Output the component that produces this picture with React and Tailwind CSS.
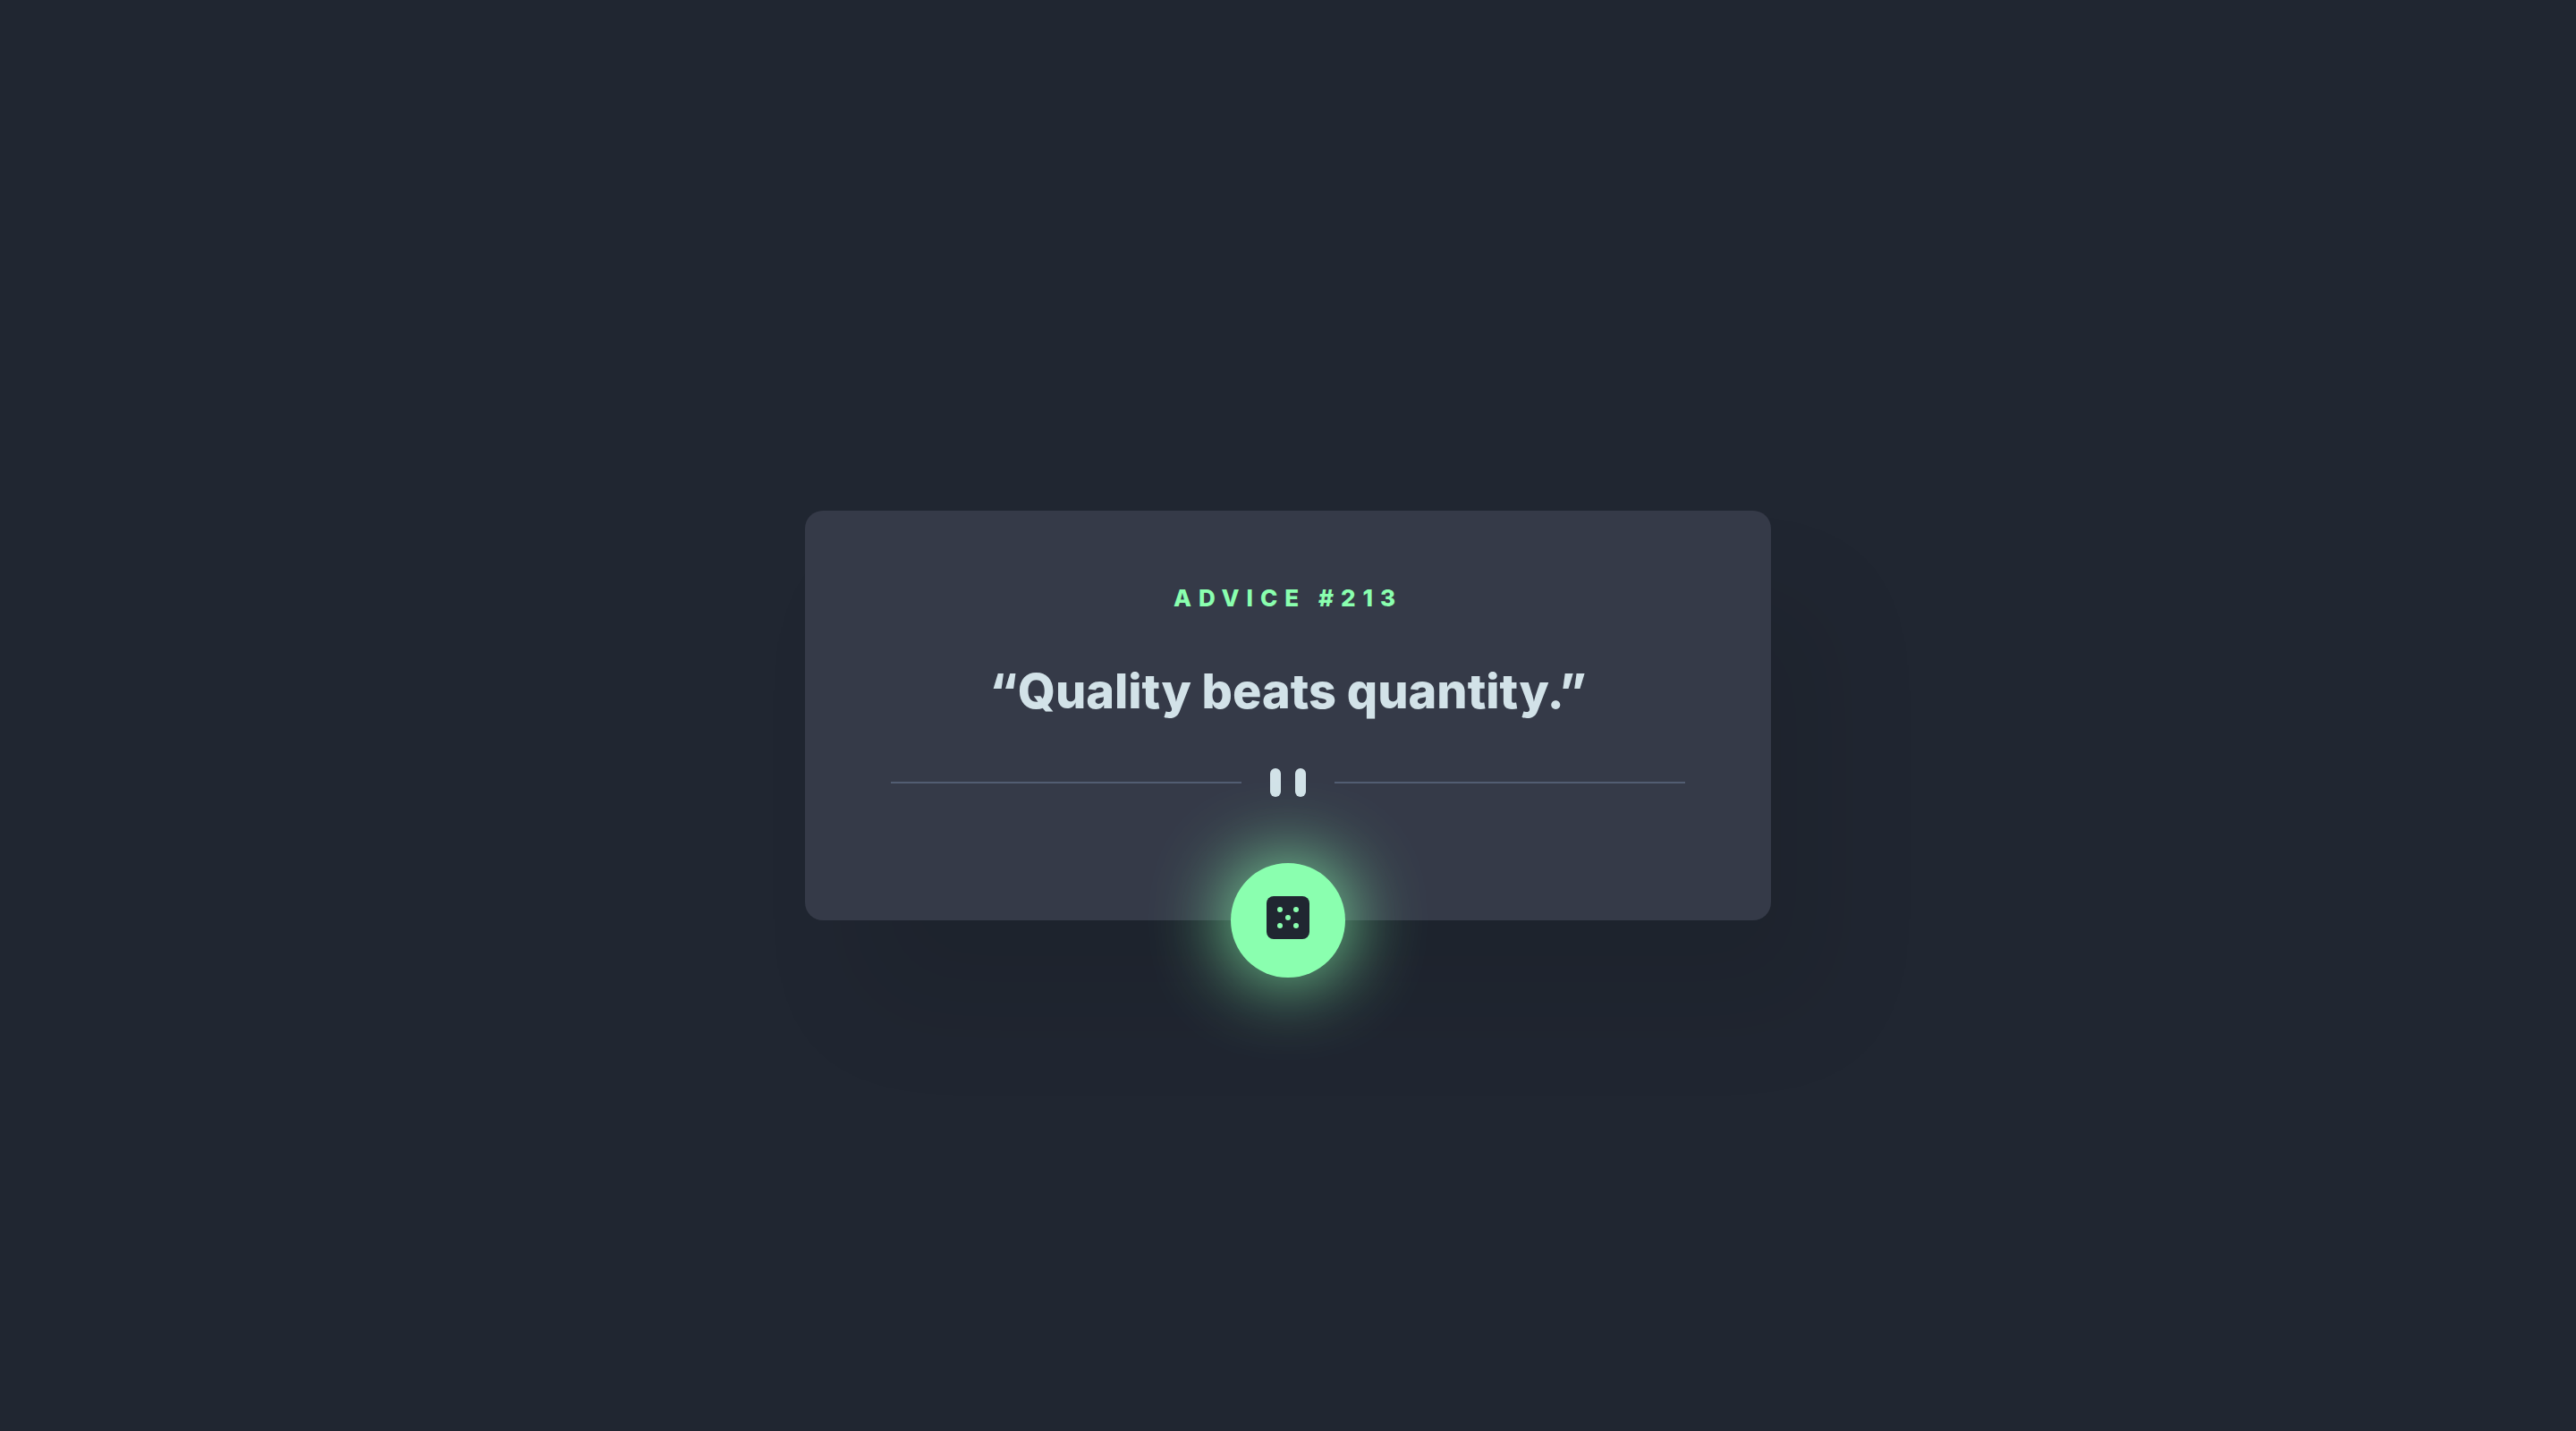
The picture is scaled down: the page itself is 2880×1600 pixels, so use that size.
function DiceIcon() {
  return (
    <svg viewBox="0 0 48 48" className="-mt-1.5 size-12" aria-hidden="true">
      <rect width="48" height="48" rx="8" fill="#202631" />
      <g fill="#8affaf">
        <circle cx="15" cy="15" r="3" />
        <circle cx="33" cy="15" r="3" />
        <circle cx="24" cy="24" r="3" />
        <circle cx="15" cy="33" r="3" />
        <circle cx="33" cy="33" r="3" />
      </g>
    </svg>
  );
}

function Divider() {
  return (
    <div className="mt-12 flex w-full items-center" aria-hidden="true">
      <span className="h-0.5 flex-1 bg-[#525d72]" />
      <span className="mx-8 flex gap-4">
        <span className="h-8 w-3 rounded-full bg-[#d2e2e8]" />
        <span className="h-8 w-3 rounded-full bg-[#d2e2e8]" />
      </span>
      <span className="h-0.5 flex-1 bg-[#525d72]" />
    </div>
  );
}

export default function App() {
  return (
    <main className="flex min-h-screen items-center justify-center bg-[#202631] font-['Inter',sans-serif]">
      <section className="flex w-full max-w-[1080px] flex-col items-center rounded-[20px] bg-[#353a48] px-24 pt-20 text-center shadow-[60px_100px_120px_rgba(0,0,0,0.08)]">
        <h1 className="text-[26px] leading-9 font-extrabold tracking-[8px] text-[#8affaf] uppercase">
          Advice #213
        </h1>
        <p className="mt-12 text-[54px] leading-[76px] font-extrabold text-[#d2e2e8]">
          “Quality beats quantity.”
        </p>
        <Divider />
        <button
          type="button"
          aria-label="New advice"
          className="mt-[74px] -mb-16 flex size-32 cursor-pointer items-center justify-center rounded-full bg-[#8affaf] shadow-[0_0_90px_#8affaf]"
        >
          <DiceIcon />
        </button>
      </section>
    </main>
  );
}
